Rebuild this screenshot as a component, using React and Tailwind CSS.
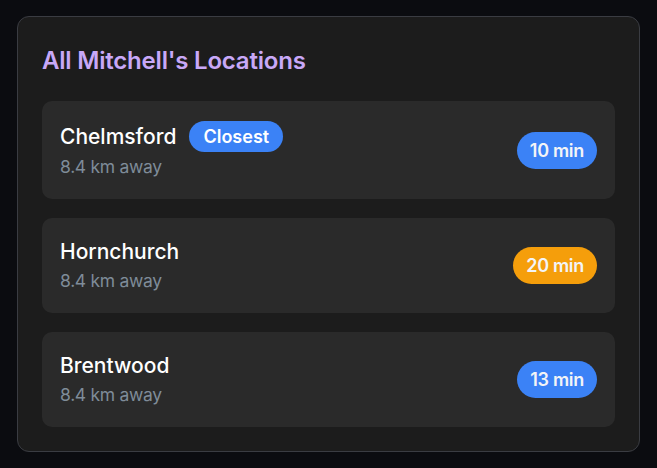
const locations = [
  { name: "Chelmsford", distance: "8.4 km away", time: "10 min", color: "bg-[#3b82f6]", closest: true },
  { name: "Hornchurch", distance: "8.4 km away", time: "20 min", color: "bg-[#f59e0b]" },
  { name: "Brentwood", distance: "8.4 km away", time: "13 min", color: "bg-[#3b82f6]" },
];

export default function App() {
  return (
    <div className="min-h-[468px] w-full bg-[#0b0c10] px-[17px] pt-[16px] pb-[17px] font-['Inter',sans-serif]">
      <div className="rounded-[12px] border border-[#3a3c42] bg-[#1c1c1c] px-[24px] pt-[27px] pb-[24px]">
        {/* Header */}
        <h2 className="text-[24px] leading-[34px] font-semibold tracking-[-0.2px] text-[#c8a8f8]">
          All Mitchell's Locations
        </h2>

        {/* Location list */}
        <div className="mt-[23px] flex flex-col gap-[19px]">
          {locations.map((loc) => (
            <div
              key={loc.name}
              className="flex items-center justify-between rounded-[10px] bg-[#2a2a2a] px-[18px] py-[20px]"
            >
              <div className="flex flex-col">
                <div className="flex items-center gap-[13px]">
                  <span className="text-[21px] leading-[28px] font-medium text-white">{loc.name}</span>
                  {loc.closest && (
                    <span className="rounded-full bg-[#3b82f6] px-[14px] py-[3px] text-[18px] leading-[25px] font-semibold text-white">
                      Closest
                    </span>
                  )}
                </div>
                <span className="mt-[3px] text-[17.5px] leading-[24px] tracking-[-0.3px] text-[#7f8c99]">{loc.distance}</span>
              </div>
              <span
                className={`${loc.color} rounded-full px-[13px] py-[6px] text-[18px] leading-[25px] font-semibold tracking-[-0.3px] text-[#f3f4f6]`}
              >
                {loc.time}
              </span>
            </div>
          ))}
        </div>
      </div>
    </div>
  );
}
